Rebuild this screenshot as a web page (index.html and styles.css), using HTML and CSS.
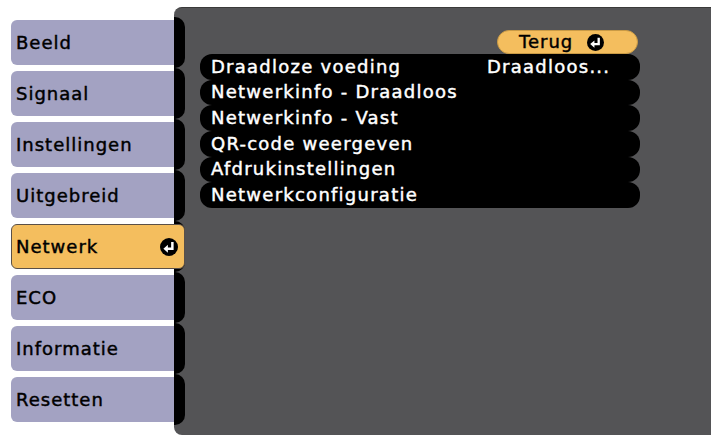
FILE: index.html
```html
<!DOCTYPE html>
<html>
<head>
<meta charset="utf-8">
<link rel="stylesheet" href="styles.css">
</head>
<body>
<div class="screen">
  <div class="tabs">
    <div class="tabrow"><div class="tab">Beeld</div><div class="nub"></div></div>
    <div class="tabrow"><div class="tab">Signaal</div><div class="nub"></div></div>
    <div class="tabrow"><div class="tab">Instellingen</div><div class="nub"></div></div>
    <div class="tabrow"><div class="tab">Uitgebreid</div><div class="nub"></div></div>
    <div class="tabrow"><div class="tab active">Netwerk
      <svg class="ret big" viewBox="0 0 16 16"><circle cx="8" cy="8" r="8" fill="#000"/><path d="M11 3.5V9.5H6" fill="none" stroke="#fff" stroke-width="2.2"/><polygon points="3,9.5 7,6 7,13" fill="#fff"/></svg>
    </div><div class="nub"></div></div>
    <div class="tabrow"><div class="tab">ECO</div><div class="nub"></div></div>
    <div class="tabrow"><div class="tab">Informatie</div><div class="nub"></div></div>
    <div class="tabrow"><div class="tab">Resetten</div><div class="nub"></div></div>
  </div>
  <div class="panel">
    <div class="menu">
      <div class="backrow">
        <div class="back">Terug
          <svg class="ret" viewBox="0 0 16 16"><circle cx="8" cy="8" r="8" fill="#000"/><path d="M11 3.5V9.5H6" fill="none" stroke="#fff" stroke-width="2.2"/><polygon points="3,9.5 7,6 7,13" fill="#fff"/></svg>
        </div>
      </div>
      <div class="rows">
        <div class="row"><span class="label">Draadloze voeding</span><span class="value">Draadloos...</span></div>
        <div class="row"><span class="label">Netwerkinfo - Draadloos</span></div>
        <div class="row"><span class="label">Netwerkinfo - Vast</span></div>
        <div class="row"><span class="label">QR-code weergeven</span></div>
        <div class="row"><span class="label">Afdrukinstellingen</span></div>
        <div class="row"><span class="label">Netwerkconfiguratie</span></div>
      </div>
    </div>
  </div>
</div>
</body>
</html>
```
FILE: styles.css
```css
html, body {
  margin: 0;
  padding: 0;
  background: #fff;
}
body {
  font-family: "DejaVu Sans", Verdana, sans-serif;
  font-size: 18px;
  letter-spacing: 1px;
  -webkit-text-stroke: 0.45px currentColor;
}
.screen {
  display: flex;
  width: 711px;
  height: 437px;
  overflow: hidden;
}
.tabs {
  position: relative;
  z-index: 1;
  display: flex;
  flex-direction: column;
  padding-top: 17px;
  margin-left: 11px;
  width: 174px;
  flex: none;
}
.tabrow {
  display: flex;
  height: 51px;
  position: relative;
}
.tab {
  width: 163px;
  height: 45px;
  margin: 3px 0;
  background: #a3a2c2;
  border-radius: 6px 0 0 6px;
  box-sizing: border-box;
  padding-left: 5px;
  display: flex;
  align-items: center;
  color: #000;
}
.nub {
  width: 11px;
  height: 51px;
  background: #000;
  border-radius: 0 10px 10px 0;
}
.tab.active {
  background: #f4be5e;
  width: 174px;
  margin-right: -11px;
  position: relative;
  z-index: 1;
  border: 1px solid #5a5048;
  border-radius: 6px;
  padding-left: 4px;
  justify-content: space-between;
  padding-right: 6px;
}
.ret {
  width: 17px;
  height: 17px;
  display: block;
  -webkit-text-stroke: 0;
}
.ret.big {
  width: 18px;
  height: 18px;
}
.panel {
  flex: 1;
  margin-left: -11px;
  margin-top: 7px;
  height: 428px;
  background: #545456;
  border-radius: 8px 0 0 8px;
  border-top: 1px solid #3a3a3a;
  box-sizing: border-box;
  padding: 22px 0 0 26px;
}
.menu {
  width: 440px;
}
.backrow {
  display: flex;
  justify-content: flex-end;
  padding-right: 2px;
}
.back {
  width: 141px;
  height: 24px;
  box-sizing: border-box;
  background: #f4be5e;
  border: 1px solid #c99a45;
  border-radius: 12px;
  display: flex;
  align-items: center;
  padding-left: 21px;
  gap: 14px;
  color: #000;
  line-height: 1;
}
.rows {
  display: flex;
  flex-direction: column;
}
.row {
  height: 25.67px;
  background: #000;
  border-radius: 12px;
  color: #fff;
  display: flex;
  align-items: center;
  padding-left: 11px;
  line-height: 1;
  letter-spacing: 1.25px;
}
.label {
  width: 276px;
  flex: none;
  white-space: nowrap;
}
.value {
  white-space: nowrap;
}
```
